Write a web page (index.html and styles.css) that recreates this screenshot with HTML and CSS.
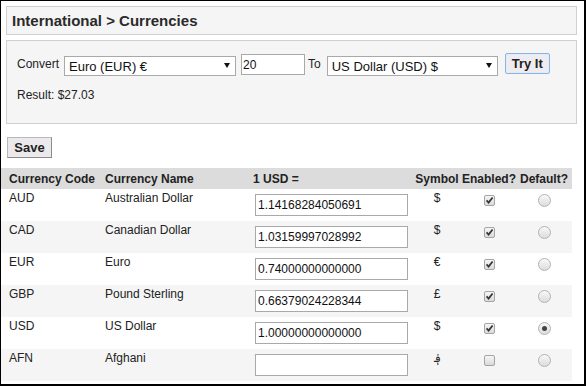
FILE: index.html
```html
<!DOCTYPE html>
<html>
<head>
  <title>International &gt; Currencies</title>
  <link rel="stylesheet" href="styles.css">
</head>
<body>
  <div class="frame">
    <div class="crumbs">International &gt; Currencies</div>

    <form class="converter" name="convertForm" onsubmit="return false;">
      <div class="convert-row">
        <label for="from" class="lbl">Convert</label>
        <span class="sel sel-from">
          <select id="from" name="from">
            <option>Euro (EUR) €</option>
          </select>
        </span>
        <input type="text" class="amount" name="amount" value="20">
        <label for="to" class="lbl lbl-to">To</label>
        <span class="sel sel-to">
          <select id="to" name="to">
            <option>US Dollar (USD) $</option>
          </select>
        </span>
        <button type="submit" class="btn btn-try">Try It</button>
      </div>
      <div class="result">Result: $27.03</div>
    </form>

    <button type="button" class="btn btn-save">Save</button>

    <table class="currencies">
      <colgroup>
        <col class="c-code">
        <col class="c-name">
        <col class="c-rate">
        <col class="c-sym">
        <col class="c-en">
        <col class="c-def">
      </colgroup>
      <tr>
        <th>Currency Code</th>
        <th>Currency Name</th>
        <th>1 USD =</th>
        <th class="mid">Symbol</th>
        <th class="mid">Enabled?</th>
        <th class="mid">Default?</th>
      </tr>
      <tr>
        <td>AUD</td>
        <td>Australian Dollar</td>
        <td><input type="text" class="rate" value="1.14168284050691"></td>
        <td class="mid sym">$</td>
        <td class="mid"><span class="chk"><svg width="11" height="11" viewBox="0 0 11 11"><path d="M2.6 5.4 L4.6 7.6 L8.6 2.4" fill="none" stroke="#333" stroke-width="1.7"/></svg></span></td>
        <td class="mid"><span class="radio"></span></td>
      </tr>
      <tr class="alt">
        <td>CAD</td>
        <td>Canadian Dollar</td>
        <td><input type="text" class="rate" value="1.03159997028992"></td>
        <td class="mid sym">$</td>
        <td class="mid"><span class="chk"><svg width="11" height="11" viewBox="0 0 11 11"><path d="M2.6 5.4 L4.6 7.6 L8.6 2.4" fill="none" stroke="#333" stroke-width="1.7"/></svg></span></td>
        <td class="mid"><span class="radio"></span></td>
      </tr>
      <tr>
        <td>EUR</td>
        <td>Euro</td>
        <td><input type="text" class="rate" value="0.74000000000000"></td>
        <td class="mid sym">€</td>
        <td class="mid"><span class="chk"><svg width="11" height="11" viewBox="0 0 11 11"><path d="M2.6 5.4 L4.6 7.6 L8.6 2.4" fill="none" stroke="#333" stroke-width="1.7"/></svg></span></td>
        <td class="mid"><span class="radio"></span></td>
      </tr>
      <tr class="alt">
        <td>GBP</td>
        <td>Pound Sterling</td>
        <td><input type="text" class="rate" value="0.66379024228344"></td>
        <td class="mid sym">£</td>
        <td class="mid"><span class="chk"><svg width="11" height="11" viewBox="0 0 11 11"><path d="M2.6 5.4 L4.6 7.6 L8.6 2.4" fill="none" stroke="#333" stroke-width="1.7"/></svg></span></td>
        <td class="mid"><span class="radio"></span></td>
      </tr>
      <tr>
        <td>USD</td>
        <td>US Dollar</td>
        <td><input type="text" class="rate" value="1.00000000000000"></td>
        <td class="mid sym">$</td>
        <td class="mid"><span class="chk"><svg width="11" height="11" viewBox="0 0 11 11"><path d="M2.6 5.4 L4.6 7.6 L8.6 2.4" fill="none" stroke="#333" stroke-width="1.7"/></svg></span></td>
        <td class="mid"><span class="radio on"></span></td>
      </tr>
      <tr class="alt">
        <td>AFN</td>
        <td>Afghani</td>
        <td><input type="text" class="rate" value=""></td>
        <td class="mid sym">؋</td>
        <td class="mid"><span class="chk"></span></td>
        <td class="mid"><span class="radio"></span></td>
      </tr>
    </table>
  </div>
</body>
</html>
```

FILE: styles.css
```css
body {
  margin: 0;
  font-family: "Liberation Sans", Arial, sans-serif;
  font-size: 12px;
  color: #222;
  background-color: #fff;
}

.frame {
  width: 586px;
  height: 386px;
  box-sizing: border-box;
  border-style: solid;
  border-color: #000;
  border-width: 1px 2px 2px 1px;
  overflow: hidden;
}

/* page title box */
.crumbs {
  width: 571px;
  height: 29px;
  box-sizing: border-box;
  margin: 5px 0 0 5px;
  padding-left: 5px;
  border: 1px solid #d0d0d0;
  background-color: #f5f5f5;
  font-size: 15px;
  font-weight: bold;
  line-height: 27px;
  color: #2b2b2b;
}

/* converter box */
.converter {
  width: 571px;
  height: 84px;
  box-sizing: border-box;
  margin: 5px 0 0 5px;
  padding: 12px 0 0 10px;
  border: 1px solid #d0d0d0;
  background-color: #f5f5f5;
}

.convert-row {
  display: flex;
  align-items: flex-start;
  height: 21px;
}

.lbl {
  margin-top: 4px;
  line-height: 14px;
}

.lbl-to {
  margin-left: 3px;
}

.sel {
  position: relative;
  display: block;
  margin: 3px 0 0 5px;
}

.sel select {
  display: block;
  -webkit-appearance: none;
  appearance: none;
  height: 20px;
  margin: 0;
  padding: 0 0 0 4px;
  border: 1px solid #a9a9a9;
  border-radius: 0;
  background-color: #fff;
  font-family: "Liberation Sans", Arial, sans-serif;
  font-size: 13px;
  color: #111;
}

.sel-from select {
  width: 172px;
}

.sel-to {
  margin-left: 6px;
}

.sel-to select {
  width: 171px;
}

.sel::after {
  content: "";
  position: absolute;
  right: 6px;
  top: 7px;
  border-left: 3px solid transparent;
  border-right: 3px solid transparent;
  border-top: 5px solid #111;
}

.amount {
  width: 64px;
  height: 21px;
  box-sizing: border-box;
  margin: 1px 0 0 5px;
  padding: 0 1px;
  border: 1px solid #a9a9a9;
  font-family: "Liberation Sans", Arial, sans-serif;
  font-size: 12px;
  color: #111;
}

.result {
  margin-top: 14px;
  line-height: 14px;
}

.btn {
  height: 21px;
  width: 45px;
  padding: 0;
  font-family: "Liberation Sans", Arial, sans-serif;
  font-size: 13px;
  font-weight: bold;
  color: #222;
  background-color: #ece9ec;
  border: 1px solid;
  border-color: #b8b8b8 #8c8c8c #8c8c8c #b8b8b8;
}

.btn-try {
  margin-left: 7px;
  border-color: #8cb3e6;
  border-radius: 2px;
  box-shadow: inset 0 0 0 1px #e0ecfa;
  background-color: #efecf0;
}

.btn-save {
  display: block;
  margin: 13px 0 0 6px;
}

/* currency list */
.currencies {
  width: 571px;
  margin-top: 10px;
  border-collapse: collapse;
  table-layout: fixed;
}

.c-code { width: 96px; }
.c-name { width: 148px; }
.c-rate { width: 167px; }
.c-sym { width: 50px; }
.c-en { width: 54px; }
.c-def { width: 56px; }

.currencies th {
  height: 21px;
  padding: 0 0 0 8px;
  background-color: #dcdcdc;
  font-weight: bold;
  text-align: left;
  vertical-align: middle;
  line-height: 14px;
}

.currencies td {
  padding: 2px 0 2px 8px;
  vertical-align: top;
  line-height: 14px;
}

.currencies .mid {
  padding-left: 0;
  text-align: center;
}

.currencies tr.alt td {
  background-color: #f5f5f5;
}

.sym {
  font-family: "Liberation Sans", "DejaVu Sans", sans-serif;
}

.rate {
  display: block;
  width: 153px;
  height: 22px;
  box-sizing: border-box;
  margin: 3px 0 3px 2px;
  padding: 0 2px;
  border: 1px solid #a9a9a9;
  font-family: "Liberation Sans", Arial, sans-serif;
  font-size: 12px;
  color: #111;
}

.chk {
  display: inline-block;
  width: 11px;
  height: 11px;
  margin-top: 4px;
  box-sizing: border-box;
  border: 1px solid #a4a4a4;
  border-radius: 2px;
  background: linear-gradient(#f6f6f6, #dadada);
  vertical-align: top;
  position: relative;
}

.chk svg {
  position: absolute;
  left: -1px;
  top: -1px;
}

.radio {
  display: inline-block;
  width: 13px;
  height: 13px;
  margin-top: 3px;
  box-sizing: border-box;
  border: 1px solid #b4b4b4;
  border-radius: 50%;
  background: linear-gradient(#f8f8f8, #dcdcdc);
  vertical-align: top;
  position: relative;
}

.radio.on::after {
  content: "";
  position: absolute;
  left: 3px;
  top: 3px;
  width: 5px;
  height: 5px;
  border-radius: 50%;
  background-color: #444;
}
```
